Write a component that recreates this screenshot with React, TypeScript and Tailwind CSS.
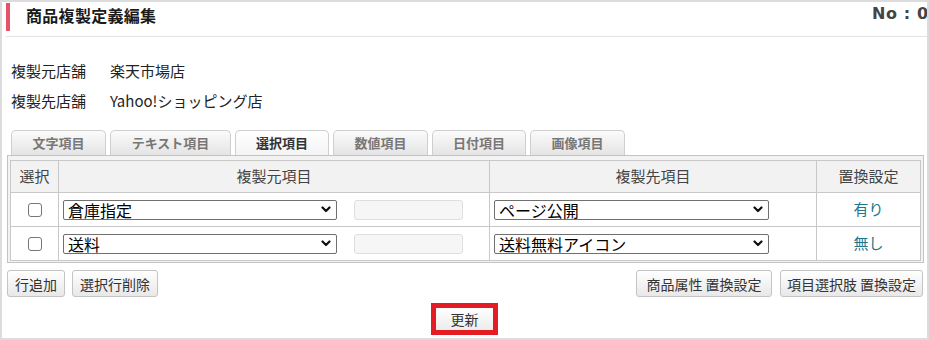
import React from "react";

const Chevron = () => (
  <svg width="10" height="7" viewBox="0 0 10 7" className="shrink-0">
    <polyline points="1.5,1.5 5,5 8.5,1.5" fill="none" stroke="#111" strokeWidth="2.2" strokeLinecap="round" strokeLinejoin="round" />
  </svg>
);

const Select = ({ value, w }: { value: string; w: string }) => (
  <div className={`${w} h-[20px] border border-[#6f6f6f] rounded-[2px] bg-white flex items-center justify-between pl-[4px] pr-[5px]`}>
    <span className="text-[16px] leading-[18px] text-black whitespace-nowrap">{value}</span>
    <Chevron />
  </div>
);

const Btn = ({ children, w }: { children: React.ReactNode; w: string }) => (
  <div className={`${w} h-[27px] border border-[#c4c4c4] rounded-[3px] bg-gradient-to-b from-[#ffffff] to-[#e8e8e8] flex items-center justify-center text-[14px] leading-[18px] text-[#333] whitespace-nowrap`}>
    {children}
  </div>
);

const tabs = [
  { t: "文字項目", w: "w-[95px]" },
  { t: "テキスト項目", w: "w-[121px]" },
  { t: "選択項目", w: "w-[94px]", active: true },
  { t: "数値項目", w: "w-[95px]" },
  { t: "日付項目", w: "w-[94px]" },
  { t: "画像項目", w: "w-[95px]" },
];

const rows = [
  { src: "倉庫指定", dst: "ページ公開", rep: "有り" },
  { src: "送料", dst: "送料無料アイコン", rep: "無し" },
];

export default function App() {
  return (
    <div className="w-[929px] h-[340px] border-2 border-[#dcdcdc] bg-white overflow-hidden font-['Noto_Sans_CJK_JP','Noto_Sans',sans-serif] text-[#333]">
      {/* header */}
      <div className="ml-[4px] h-[35px] border-b border-[#e2e2e2] flex items-start">
        <div className="mt-[1px] w-[4px] h-[28px] bg-[#e5536b]" />
        <div className="ml-[16px] mt-[3px] text-[16px] leading-[20px] font-bold text-[#1a1a1a] tracking-[0.3px]">商品複製定義編集</div>
        <div className="ml-auto mt-[2px] w-[55px] overflow-hidden whitespace-nowrap font-['DejaVu_Sans',sans-serif] font-bold text-[16px] leading-[20px] tracking-[0.6px] text-[#444]">
          No : 05
        </div>
      </div>

      {/* shop info */}
      <div className="pt-[19px] pl-[9px] text-[15px] text-[#222]">
        <div className="flex h-[30px] items-center">
          <span className="w-[99px]">複製元店舗</span>
          <span>楽天市場店</span>
        </div>
        <div className="flex h-[30px] items-center">
          <span className="w-[99px]">複製先店舗</span>
          <span>Yahoo!ショッピング店</span>
        </div>
      </div>

      {/* tabs */}
      <div className="mt-[14px] pl-[9px] flex gap-[4px] items-end">
        {tabs.map((tb) => (
          <div
            key={tb.t}
            className={`${tb.w} h-[25px] border border-b-0 border-[#cfcfcf] rounded-t-[5px] flex items-center justify-center text-[13px] leading-[16px] font-bold ${
              tb.active
                ? "bg-gradient-to-b from-[#ffffff] to-[#f4f4f4] text-[#333]"
                : "bg-gradient-to-b from-[#fbfbfb] to-[#e4e4e4] text-[#777]"
            }`}
          >
            {tb.t}
          </div>
        ))}
      </div>

      {/* panel */}
      <div className="ml-[5px] mr-[3px] border border-[#c3c3c3] bg-[#f3f3f3] pt-[4px] px-[2px] pb-[1px]">
        <table className="w-full border-collapse border border-[#bdbdbd] bg-white text-[15px] text-[#444]">
          <thead>
            <tr className="h-[32px] bg-[#f2f2f2]">
              <th className="w-[48px] border border-[#c8c8c8] font-normal">選択</th>
              <th className="w-[431px] border border-[#c8c8c8] font-normal">複製元項目</th>
              <th className="w-[327px] border border-[#c8c8c8] font-normal">複製先項目</th>
              <th className="border border-[#c8c8c8] font-normal">置換設定</th>
            </tr>
          </thead>
          <tbody>
            {rows.map((r) => (
              <tr key={r.src} className="h-[34px]">
                <td className="border border-[#c8c8c8]">
                  <div className="mx-auto w-[14px] h-[14px] border border-[#767676] rounded-[3px] bg-white" />
                </td>
                <td className="border border-[#c8c8c8] pl-[4px]">
                  <div className="flex items-center gap-[17px]">
                    <Select value={r.src} w="w-[274px]" />
                    <div className="w-[109px] h-[20px] border border-[#dedede] rounded-[3px] bg-[#f6f6f6]" />
                  </div>
                </td>
                <td className="border border-[#c8c8c8] pl-[4px]">
                  <Select value={r.dst} w="w-[275px]" />
                </td>
                <td className="border border-[#c8c8c8] text-center text-[#22758c]">{r.rep}</td>
              </tr>
            ))}
          </tbody>
        </table>
      </div>

      {/* buttons */}
      <div className="mt-[7px] ml-[5px] mr-[4px] flex items-center gap-[7px]">
        <Btn w="w-[58px]">行追加</Btn>
        <Btn w="w-[86px]">選択行削除</Btn>
        <div className="ml-auto flex gap-[8px]">
          <Btn w="w-[136px]">商品属性 置換設定</Btn>
          <Btn w="w-[143px]">項目選択肢 置換設定</Btn>
        </div>
      </div>

      {/* update */}
      <div className="mt-[6px] flex justify-center">
        <div className="border-[5px] border-[#e41d25]">
          <div className="w-[57px] h-[22px] bg-gradient-to-b from-[#ffffff] to-[#ececec] flex items-center justify-center text-[14px] leading-[18px] text-[#333]">
            更新
          </div>
        </div>
      </div>
    </div>
  );
}
